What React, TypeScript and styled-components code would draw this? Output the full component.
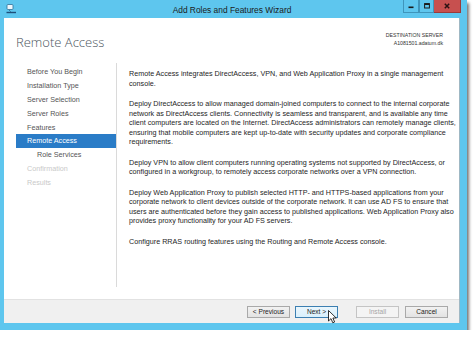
import React from "react"
import styled, { createGlobalStyle } from "styled-components"

const GlobalStyle = createGlobalStyle`
  html, body {
    margin: 0;
    padding: 0;
    background: #ffffff;
  }
  body {
    font-family: "Segoe UI", "Liberation Sans", Arial, sans-serif;
    color: #222;
  }
`

const Window = styled.div`
  position: relative;
  width: 467px;
  height: 330px;
  box-sizing: border-box;
  padding: 0 7px 7px 4px;
  display: flex;
  flex-direction: column;
  background: #5ec6ee;
  box-shadow: 2px 3px 3px rgba(0, 0, 0, 0.55);
`

const TitleBar = styled.div`
  height: 18px;
  display: grid;
  grid-template-columns: 1fr auto 1fr;
  align-items: center;
`

const AppIcon = styled.svg`
  width: 11px;
  height: 10px;
  margin-left: 2px;
`

const TitleText = styled.div`
  font-size: 8.4px;
  color: #1b1b1b;
  padding-top: 1px;
`

const CaptionGroup = styled.div`
  justify-self: end;
  align-self: start;
  display: flex;
  height: 13px;
  margin-right: -1px;
`

const CaptionButton = styled.div<{ $close?: boolean; $w: number }>`
  width: ${(p) => p.$w}px;
  height: 100%;
  box-sizing: border-box;
  display: flex;
  align-items: center;
  justify-content: center;
  background: ${(p) => (p.$close ? "#c7504f" : "#5ec6ee")};
  border: 1px solid ${(p) => (p.$close ? "#9a3a3a" : "#3f95bb")};
  border-top: none;
  border-left-width: ${(p) => (p.$close ? 0 : 1)}px;
`

const Client = styled.div`
  flex: 1;
  display: flex;
  flex-direction: column;
  background: #ffffff;
  border-right: 1px solid #9fb8c4;
`

const Header = styled.div`
  height: 45px;
  display: flex;
  justify-content: space-between;
  align-items: flex-start;
  padding: 0 16px 0 12px;
`

const PageTitle = styled.div`
  padding-top: 15px;
  font-family: "Open Sans", "Liberation Sans", sans-serif;
  font-weight: 300;
  font-size: 13px;
  color: #4c5660;
`

const ServerInfo = styled.div`
  padding-top: 13px;
  text-align: right;
  font-size: 5.2px;
  line-height: 8px;
  color: #333;
`

const Body = styled.div`
  flex: 1;
  display: flex;
  padding-bottom: 12px;
`

const Nav = styled.div`
  width: 100px;
  margin-left: 12px;
  padding-top: 2px;
  display: flex;
  flex-direction: column;
`

const NavItem = styled.div<{ $active?: boolean; $disabled?: boolean; $indent?: boolean }>`
  height: 13.9px;
  line-height: 13.9px;
  padding-left: ${(p) => (p.$indent ? 21 : 11)}px;
  font-size: 7.2px;
  white-space: nowrap;
  background: ${(p) => (p.$active ? "#2a7cc7" : "transparent")};
  color: ${(p) => (p.$active ? "#ffffff" : p.$disabled ? "#c9c9c9" : "#555")};
`

const Content = styled.div`
  flex: 1;
  border-left: 1px solid #dadada;
  padding: 6px 0 0 12px;
`

const Paragraph = styled.p`
  margin: 0 0 11px;
  font-size: 7.2px;
  line-height: 9.5px;
  white-space: nowrap;
  color: #1e1e1e;
`

const Footer = styled.div`
  height: 24px;
  box-sizing: border-box;
  display: flex;
  justify-content: flex-end;
  align-items: center;
  padding-right: 11px;
  background: #f0f0f0;
  border-top: 1px solid #e2e2e2;
`

const Button = styled.div<{ $variant?: "hover" | "disabled"; $gap?: number }>`
  width: 43px;
  height: 12px;
  box-sizing: border-box;
  margin-left: ${(p) => p.$gap ?? 5}px;
  display: flex;
  align-items: center;
  justify-content: center;
  font-size: 6.6px;
  border: 1px solid
    ${(p) => (p.$variant === "hover" ? "#3c7fb1" : p.$variant === "disabled" ? "#c4c4c4" : "#a9a9a9")};
  background: ${(p) =>
    p.$variant === "hover"
      ? "linear-gradient(#eaf6fd, #d9f0fc)"
      : p.$variant === "disabled"
      ? "#f4f4f4"
      : "linear-gradient(#f2f2f2, #e3e3e3)"};
  color: ${(p) => (p.$variant === "disabled" ? "#a6a6a6" : "#222")};
`

const Cursor = styled.svg`
  position: absolute;
  left: 328px;
  top: 310px;
  width: 10px;
  height: 14px;
`

const steps = [
  { label: "Before You Begin" },
  { label: "Installation Type" },
  { label: "Server Selection" },
  { label: "Server Roles" },
  { label: "Features" },
  { label: "Remote Access", active: true },
  { label: "Role Services", indent: true },
  { label: "Confirmation", disabled: true },
  { label: "Results", disabled: true },
]

const paragraphs = [
  [
    "Remote Access integrates DirectAccess, VPN, and Web Application Proxy in a single management",
    "console.",
  ],
  [
    "Deploy DirectAccess to allow managed domain-joined computers to connect to the internal corporate",
    "network as DirectAccess clients. Connectivity is seamless and transparent, and is available any time",
    "client computers are located on the Internet. DirectAccess administrators can remotely manage clients,",
    "ensuring that mobile computers are kept up-to-date with security updates and corporate compliance",
    "requirements.",
  ],
  [
    "Deploy VPN to allow client computers running operating systems not supported by DirectAccess, or",
    "configured in a workgroup, to remotely access corporate networks over a VPN connection.",
  ],
  [
    "Deploy Web Application Proxy to publish selected HTTP- and HTTPS-based applications from your",
    "corporate network to client devices outside of the corporate network. It can use AD FS to ensure that",
    "users are authenticated before they gain access to published applications. Web Application Proxy also",
    "provides proxy functionality for your AD FS servers.",
  ],
  ["Configure RRAS routing features using the Routing and Remote Access console."],
]

export default function App() {
  return (
    <>
      <GlobalStyle />
      <Window>
        <TitleBar>
          <AppIcon viewBox="0 0 11 10">
            <rect x="1" y="0.5" width="6" height="5" rx="1" fill="#eef7fc" stroke="#2f6f97" strokeWidth="0.8" />
            <path d="M0.5 8.5 H10" stroke="#1f4f7a" strokeWidth="1.4" />
            <path d="M3 6 L5 8" stroke="#2f6f97" strokeWidth="0.8" />
          </AppIcon>
          <TitleText>Add Roles and Features Wizard</TitleText>
          <CaptionGroup>
            <CaptionButton $w={16}>
              <svg width="6" height="6" viewBox="0 0 6 6">
                <rect x="0.5" y="3.5" width="5" height="1.6" fill="#1a1a1a" />
              </svg>
            </CaptionButton>
            <CaptionButton $w={15}>
              <svg width="6" height="6" viewBox="0 0 6 6">
                <rect x="0.6" y="0.6" width="4.8" height="4.4" fill="none" stroke="#1a1a1a" strokeWidth="1" />
                <rect x="0.6" y="0.6" width="4.8" height="1.4" fill="#1a1a1a" />
              </svg>
            </CaptionButton>
            <CaptionButton $close $w={27}>
              <svg width="6" height="6" viewBox="0 0 6 6">
                <path d="M0.8 0.8 L5.2 5.2 M5.2 0.8 L0.8 5.2" stroke="#2a1212" strokeWidth="1.5" />
              </svg>
            </CaptionButton>
          </CaptionGroup>
        </TitleBar>
        <Client>
          <Header>
            <PageTitle>Remote Access</PageTitle>
            <ServerInfo>
              DESTINATION SERVER
              <br />
              A1081501.adatum.dk
            </ServerInfo>
          </Header>
          <Body>
            <Nav>
              {steps.map((s) => (
                <NavItem key={s.label} $active={s.active} $disabled={s.disabled} $indent={s.indent}>
                  {s.label}
                </NavItem>
              ))}
            </Nav>
            <Content>
              {paragraphs.map((lines, i) => (
                <Paragraph key={i}>
                  {lines.map((line, j) => (
                    <React.Fragment key={j}>
                      {j > 0 && <br />}
                      {line}
                    </React.Fragment>
                  ))}
                </Paragraph>
              ))}
            </Content>
          </Body>
          <Footer>
            <Button>&lt; Previous</Button>
            <Button $variant="hover">Next &gt;</Button>
            <Button $variant="disabled" $gap={18}>
              Install
            </Button>
            <Button $gap={6}>Cancel</Button>
          </Footer>
        </Client>
        <Cursor viewBox="0 0 10 14">
          <path d="M0.5 0.5 L0.5 11 L3 8.6 L4.8 12.8 L6.6 12 L4.9 8 L8.2 8 Z" fill="#ffffff" stroke="#000000" strokeWidth="0.8" />
        </Cursor>
      </Window>
    </>
  )
}
